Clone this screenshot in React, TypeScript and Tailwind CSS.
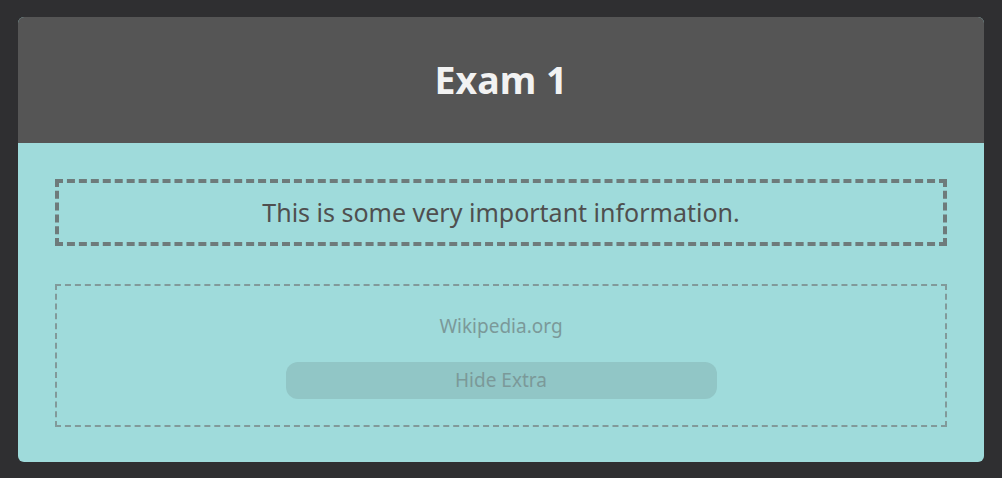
export default function App() {
  return (
    <div
      className="min-h-[478px] bg-[#2f2f31] px-[18px] pt-[17px] pb-4"
      style={{ fontFamily: '"Noto Sans", "Open Sans", sans-serif' }}
    >
      <div className="overflow-hidden rounded-[6px] bg-[#9fdbdb]">
        <header className="flex h-[126px] items-center justify-center bg-[#555555]">
          <h1 className="text-[37.5px] font-bold text-[#f2f2f2]">Exam 1</h1>
        </header>
        <main className="flex flex-col gap-[38px] px-[37px] pt-9 pb-[35px]">
          <section className="flex h-[67px] items-center justify-center border-4 border-dashed border-[#6e7b7b]">
            <p className="text-[25px] text-[#4f4f4f]">
              This is some very important information.
            </p>
          </section>
          <section className="flex h-[143px] flex-col items-center border-2 border-dashed border-[#819a9a] pt-[28px]">
            <p className="text-[19px] leading-6 text-[#7b9999]">Wikipedia.org</p>
            <button className="mt-6 h-[37px] w-[431px] rounded-xl bg-[#91c6c6] text-[19px] text-[#7b9999]">
              Hide Extra
            </button>
          </section>
        </main>
      </div>
    </div>
  );
}
